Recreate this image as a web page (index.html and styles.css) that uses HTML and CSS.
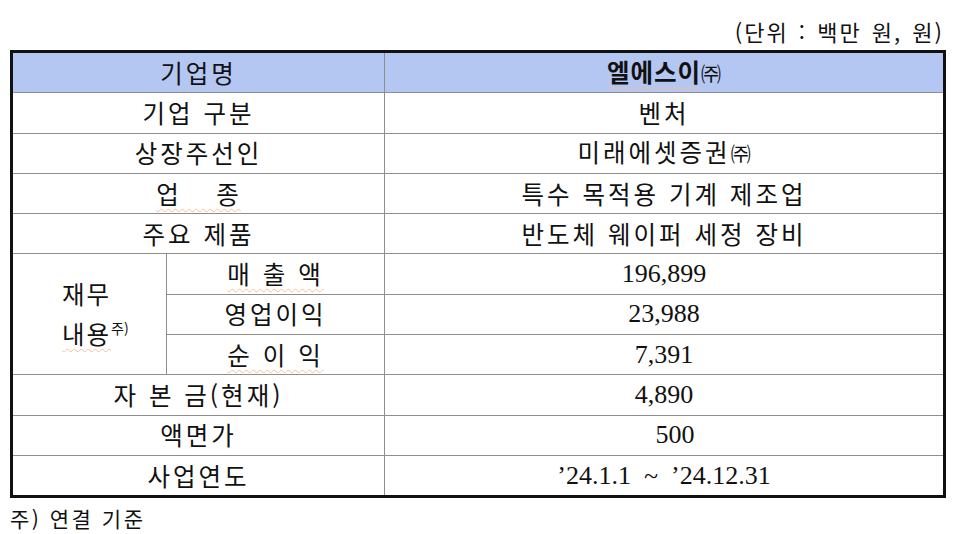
FILE: index.html
```html
<!DOCTYPE html>
<html lang="ko">
<head>
<meta charset="utf-8">
<link rel="stylesheet" href="styles.css">
</head>
<body>
<div class="page">
  <div class="unit">(단위 : 백만 원, 원)</div>
  <table class="info">
    <colgroup>
      <col class="c1">
      <col class="c2">
      <col class="c3">
    </colgroup>
    <tr class="head">
      <td colspan="2" class="lbl sp1">기업명</td>
      <td class="val"><span class="bold spell">엘에스이</span><span class="ju">㈜</span></td>
    </tr>
    <tr>
      <td colspan="2" class="lbl sp1">기업 구분</td>
      <td class="val ko">벤처</td>
    </tr>
    <tr>
      <td colspan="2" class="lbl sp1">상장주선인</td>
      <td class="val ko">미래에셋증권<span class="ju">㈜</span></td>
    </tr>
    <tr>
      <td colspan="2" class="lbl"><span class="spell">업&nbsp;&nbsp;&nbsp;&nbsp;종</span></td>
      <td class="val ko">특수 목적용 기계 제조업</td>
    </tr>
    <tr>
      <td colspan="2" class="lbl sp1">주요 제품</td>
      <td class="val ko">반도체 웨이퍼 세정 장비</td>
    </tr>
    <tr>
      <td rowspan="3" class="fin">재무<br><span class="spell">내용</span><sup>주)</sup></td>
      <td class="lbl sub"><span class="spell">매 출 액</span></td>
      <td class="val num">196,899</td>
    </tr>
    <tr>
      <td class="lbl sub">영업이익</td>
      <td class="val num">23,988</td>
    </tr>
    <tr>
      <td class="lbl sub"><span class="spell">순 이 익</span></td>
      <td class="val num">7,391</td>
    </tr>
    <tr>
      <td colspan="2" class="lbl sp1">자 본 금(현재)</td>
      <td class="val num">4,890</td>
    </tr>
    <tr>
      <td colspan="2" class="lbl sp1">액면가</td>
      <td class="val num shift">500</td>
    </tr>
    <tr>
      <td colspan="2" class="lbl sp1">사업연도</td>
      <td class="val num">’24.1.1&nbsp;&nbsp;~&nbsp;&nbsp;’24.12.31</td>
    </tr>
  </table>
  <div class="note">주) 연결 기준</div>
</div>
</body>
</html>
```

FILE: styles.css
```css
html, body {
  margin: 0;
  padding: 0;
  background: #ffffff;
}
body {
  font-family: "Noto Sans CJK KR", "Noto Sans", sans-serif;
  color: #111111;
}
.page {
  width: 960px;
  height: 534px;
  padding: 14px 0 0 10px;
  box-sizing: border-box;
}
.unit {
  width: 934px;
  text-align: right;
  font-size: 22px;
  line-height: 34px;
  letter-spacing: 2px;
  height: 36px;
  word-spacing: 2px;
}
.info {
  width: 933px;
  border-collapse: collapse;
  border: 3px solid #111111;
  table-layout: fixed;
}
.c1 { width: 155px; }
.c2 { width: 218px; }
.c3 { width: 560px; }
.info td {
  border: 1.5px solid #8e8e8e;
  height: 39.3px;
  padding: 0;
  text-align: center;
  vertical-align: middle;
  font-size: 24.5px;
  line-height: 30px;
  white-space: nowrap;
}
.info tr.head td {
  background: #b4c6f2;
}
.lbl {
  letter-spacing: 2px;
}
.sp1 {
  letter-spacing: 3px;
}
.sub {
  letter-spacing: 3px;
}
.fin {
  text-align: left !important;
  padding-left: 49px !important;
  line-height: 40px !important;
  letter-spacing: 2px;
}
.fin sup {
  font-size: 14px;
  line-height: 0;
  vertical-align: 10px;
  letter-spacing: 0;
}
.ko {
  letter-spacing: 3px;
}
.bold {
  font-weight: 700;
  letter-spacing: 1px;
}
.ju {
  font-size: 20px;
  letter-spacing: 0;
}
.spell {
  text-decoration: underline wavy #f6bf96;
  text-decoration-thickness: 1px;
  text-underline-offset: 4px;
}
.num {
  font-family: "Liberation Serif", "DejaVu Serif", serif;
  font-size: 26px !important;
}
.shift {
  padding-left: 22px !important;
}
.note {
  font-size: 21px;
  line-height: 36px;
  letter-spacing: 2.5px;
  padding-top: 2px;
}
```
